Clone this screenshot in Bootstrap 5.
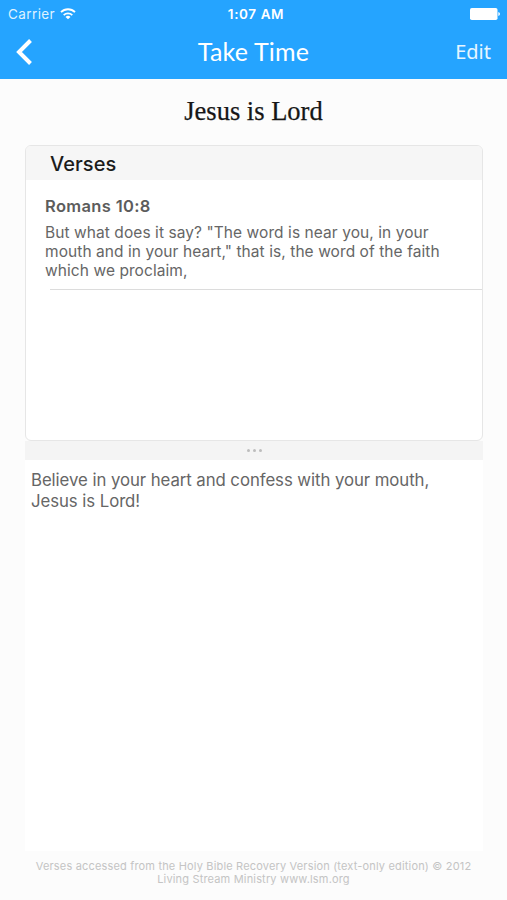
<!DOCTYPE html>
<html lang="en">
<head>
<meta charset="utf-8">
<meta name="viewport" content="width=device-width, initial-scale=1">
<title>Take Time</title>
<link href="https://cdn.jsdelivr.net/npm/bootstrap@5.3.0/dist/css/bootstrap.min.css" rel="stylesheet">
<style>
body{background:#fcfcfc;font-family:Inter,"Liberation Sans",sans-serif;color:#666}
.screen{height:900px}
.topbar{background:#25a4ff;height:79px;color:#fff}
.status-line{height:27px;padding:0 7px 0 8px;font-size:13px;line-height:27px}
.status-line>div,.title-line>div{flex:1 1 0}
.carrier{font-size:13.5px;letter-spacing:.4px;color:#dff2ff;padding-top:1px}
.clock{font-weight:600;font-size:13.5px;letter-spacing:.6px;padding:1px 0 0 4px}
.title-line{height:50px;padding:0 16px;line-height:50px}
.page-title{font-family:Lato,sans-serif;font-size:25px;letter-spacing:.2px;padding-bottom:2px}
.edit-link{font-family:"Noto Sans",sans-serif;font-size:20px;color:#e6f6ff}
.heading-text{font-family:"Liberation Serif",serif;font-size:26.5px;line-height:32px;color:#161616;padding:16px 0 0;height:66px;-webkit-text-stroke:.25px #161616}
.sheet{margin:0 24px 0 25px;width:458px}
.verses{height:296px;border:1px solid #e6e6e6;border-radius:6px;overflow:hidden}
.verses-head{background:#f6f6f6;height:34px;line-height:36px;padding-left:24px;font-size:20px;font-weight:500;letter-spacing:.08px;color:#1c1c1c}
.verse{padding:15px 0 0 19px;height:109px}
.verse-ref{font-size:16.5px;line-height:22px;font-weight:600;letter-spacing:.35px;color:#5c5c5c}
.verse-text{font-size:15.5px;line-height:19px;letter-spacing:.07px;padding-top:6px}
.rule-line{height:1px;background:#dcdcdc;margin-left:24px}
.handle{height:19px;background:#f4f4f4;gap:3px}
.handle i{width:3px;height:3px;border-radius:50%;background:#bdbdbd}
.note{height:391px;background:#fff;padding:10px 6px;font-size:16.8px;line-height:21px;letter-spacing:-.07px}
.credit{font-size:11px;line-height:13px;letter-spacing:.17px;color:#c4c4c4;padding-top:9px}
.nw{white-space:nowrap}
</style>
</head>
<body>
<div class="screen d-flex flex-column overflow-hidden">
<header class="topbar">
  <div class="status-line d-flex align-items-center">
    <div class="d-flex align-items-center"><span class="carrier">Carrier</span>
      <svg class="ms-1" width="18" height="14" viewBox="0 0 18 14" fill="none" stroke="#fff" stroke-width="1.8"><path d="M2 5.1a10 10 0 0 1 14 0M4.7 8.1a6.2 6.2 0 0 1 8.6 0"/><path d="M9 12.2 6.5 9.9a3.7 3.7 0 0 1 5 0z" fill="#fff" stroke="none"/></svg></div>
    <span class="clock">1:07 AM</span>
    <div class="d-flex justify-content-end"><svg width="30" height="12" viewBox="0 0 30 12" fill="#fff"><rect width="27.5" height="12" rx="1.8"/><path d="M28.3 4q1.7.4 1.7 2t-1.7 2z"/></svg></div>
  </div>
  <div class="title-line d-flex align-items-center">
    <div class="d-flex"><svg width="18" height="26" viewBox="0 0 18 26" fill="none" stroke="#fff" stroke-width="4"><path d="M14.5 1.5 3 13l11.5 11.5"/></svg></div>
    <span class="page-title">Take Time</span>
    <div class="text-end"><span class="edit-link">Edit</span></div>
  </div>
</header>
<h1 class="heading-text text-center m-0">Jesus is Lord</h1>
<main class="sheet">
  <section class="verses bg-white">
    <h2 class="verses-head m-0">Verses</h2>
    <article class="verse">
      <div class="verse-ref">Romans 10:8</div>
      <div class="verse-text nw">But what does it say? "The word is near you, in your<br>mouth and in your heart," that is, the word of the faith<br>which we proclaim,</div>
    </article>
    <div class="rule-line"></div>
  </section>
  <div class="handle d-flex justify-content-center align-items-center"><i></i><i></i><i></i></div>
  <div class="note nw">Believe in your heart and confess with your mouth,<br>Jesus is Lord!</div>
</main>
<footer class="credit text-center nw">Verses accessed from the Holy Bible Recovery Version (text-only edition) © 2012<br>Living Stream Ministry www.lsm.org</footer>
</div>
<script src="https://cdn.jsdelivr.net/npm/bootstrap@5.3.0/dist/js/bootstrap.bundle.min.js"></script>
</body>
</html>
